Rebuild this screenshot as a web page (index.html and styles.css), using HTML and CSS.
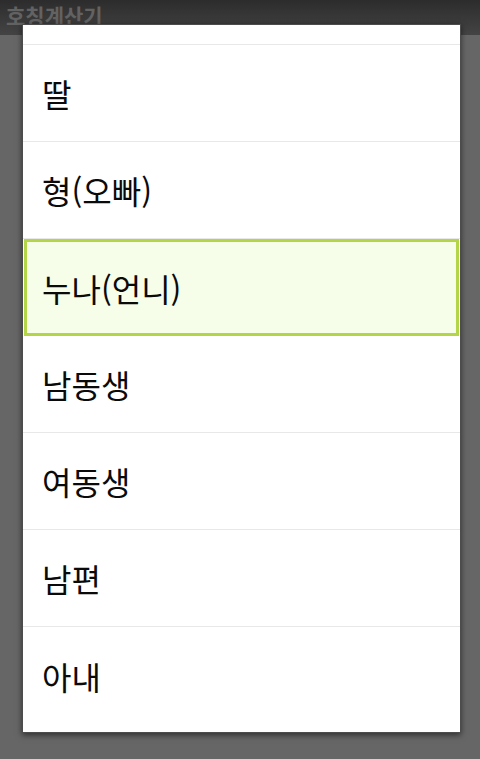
FILE: index.html
```html
<!DOCTYPE html>
<html lang="ko">
<head>
    <meta charset="UTF-8">
    <meta name="viewport" content="width=device-width, initial-scale=1.0">
    <title>호칭계산기</title>
    <link rel="stylesheet" href="styles.css">
</head>
<body>
    <div class="app">
        <div class="title-bar">호칭계산기</div>
    </div>

    <div class="dialog">
        <ul class="list">
            <li class="item item-top"></li>
            <li class="item">딸</li>
            <li class="item">형(오빠)</li>
            <li class="item selected">누나(언니)</li>
            <li class="item">남동생</li>
            <li class="item">여동생</li>
            <li class="item">남편</li>
            <li class="item">아내</li>
        </ul>
    </div>
</body>
</html>
```

FILE: styles.css
```css
body {
    margin: 0;
    padding: 0;
    background-color: #666666;
    font-family: "Noto Sans CJK KR", "Noto Sans", sans-serif;
    height: 759px;
    overflow: hidden;
}
.title-bar {
    height: 35px;
    padding-left: 6px;
    background: linear-gradient(#2c2c2c, #444444);
    color: #626262;
    font-size: 21px;
    font-weight: bold;
    line-height: 30px;
}
/* dialog over the dimmed app */
.dialog {
    position: absolute;
    top: 24px;
    left: 22px;
    width: 437px;
    height: 707px;
    border: 1px solid #4c4c4c;
    background-color: #ffffff;
    box-shadow: 0 2px 6px rgba(0, 0, 0, 0.55);
    overflow: hidden;
}
.list {
    list-style: none;
    margin: 0;
    padding: 0;
}
.item {
    height: 97px;
    border-bottom: 1px solid #e8e8e8;
    padding-left: 19px;
    display: flex;
    align-items: center;
    font-size: 32px;
    color: #0a0a0a;
    box-sizing: border-box;
}
.item-top {
    height: 20px;
}
.item:last-child {
    border-bottom: none;
}
.selected {
    margin: 0 1px;
    padding-left: 15px;
    background-color: #f6fde9;
    border: 3px solid #b5d548;
}
```
